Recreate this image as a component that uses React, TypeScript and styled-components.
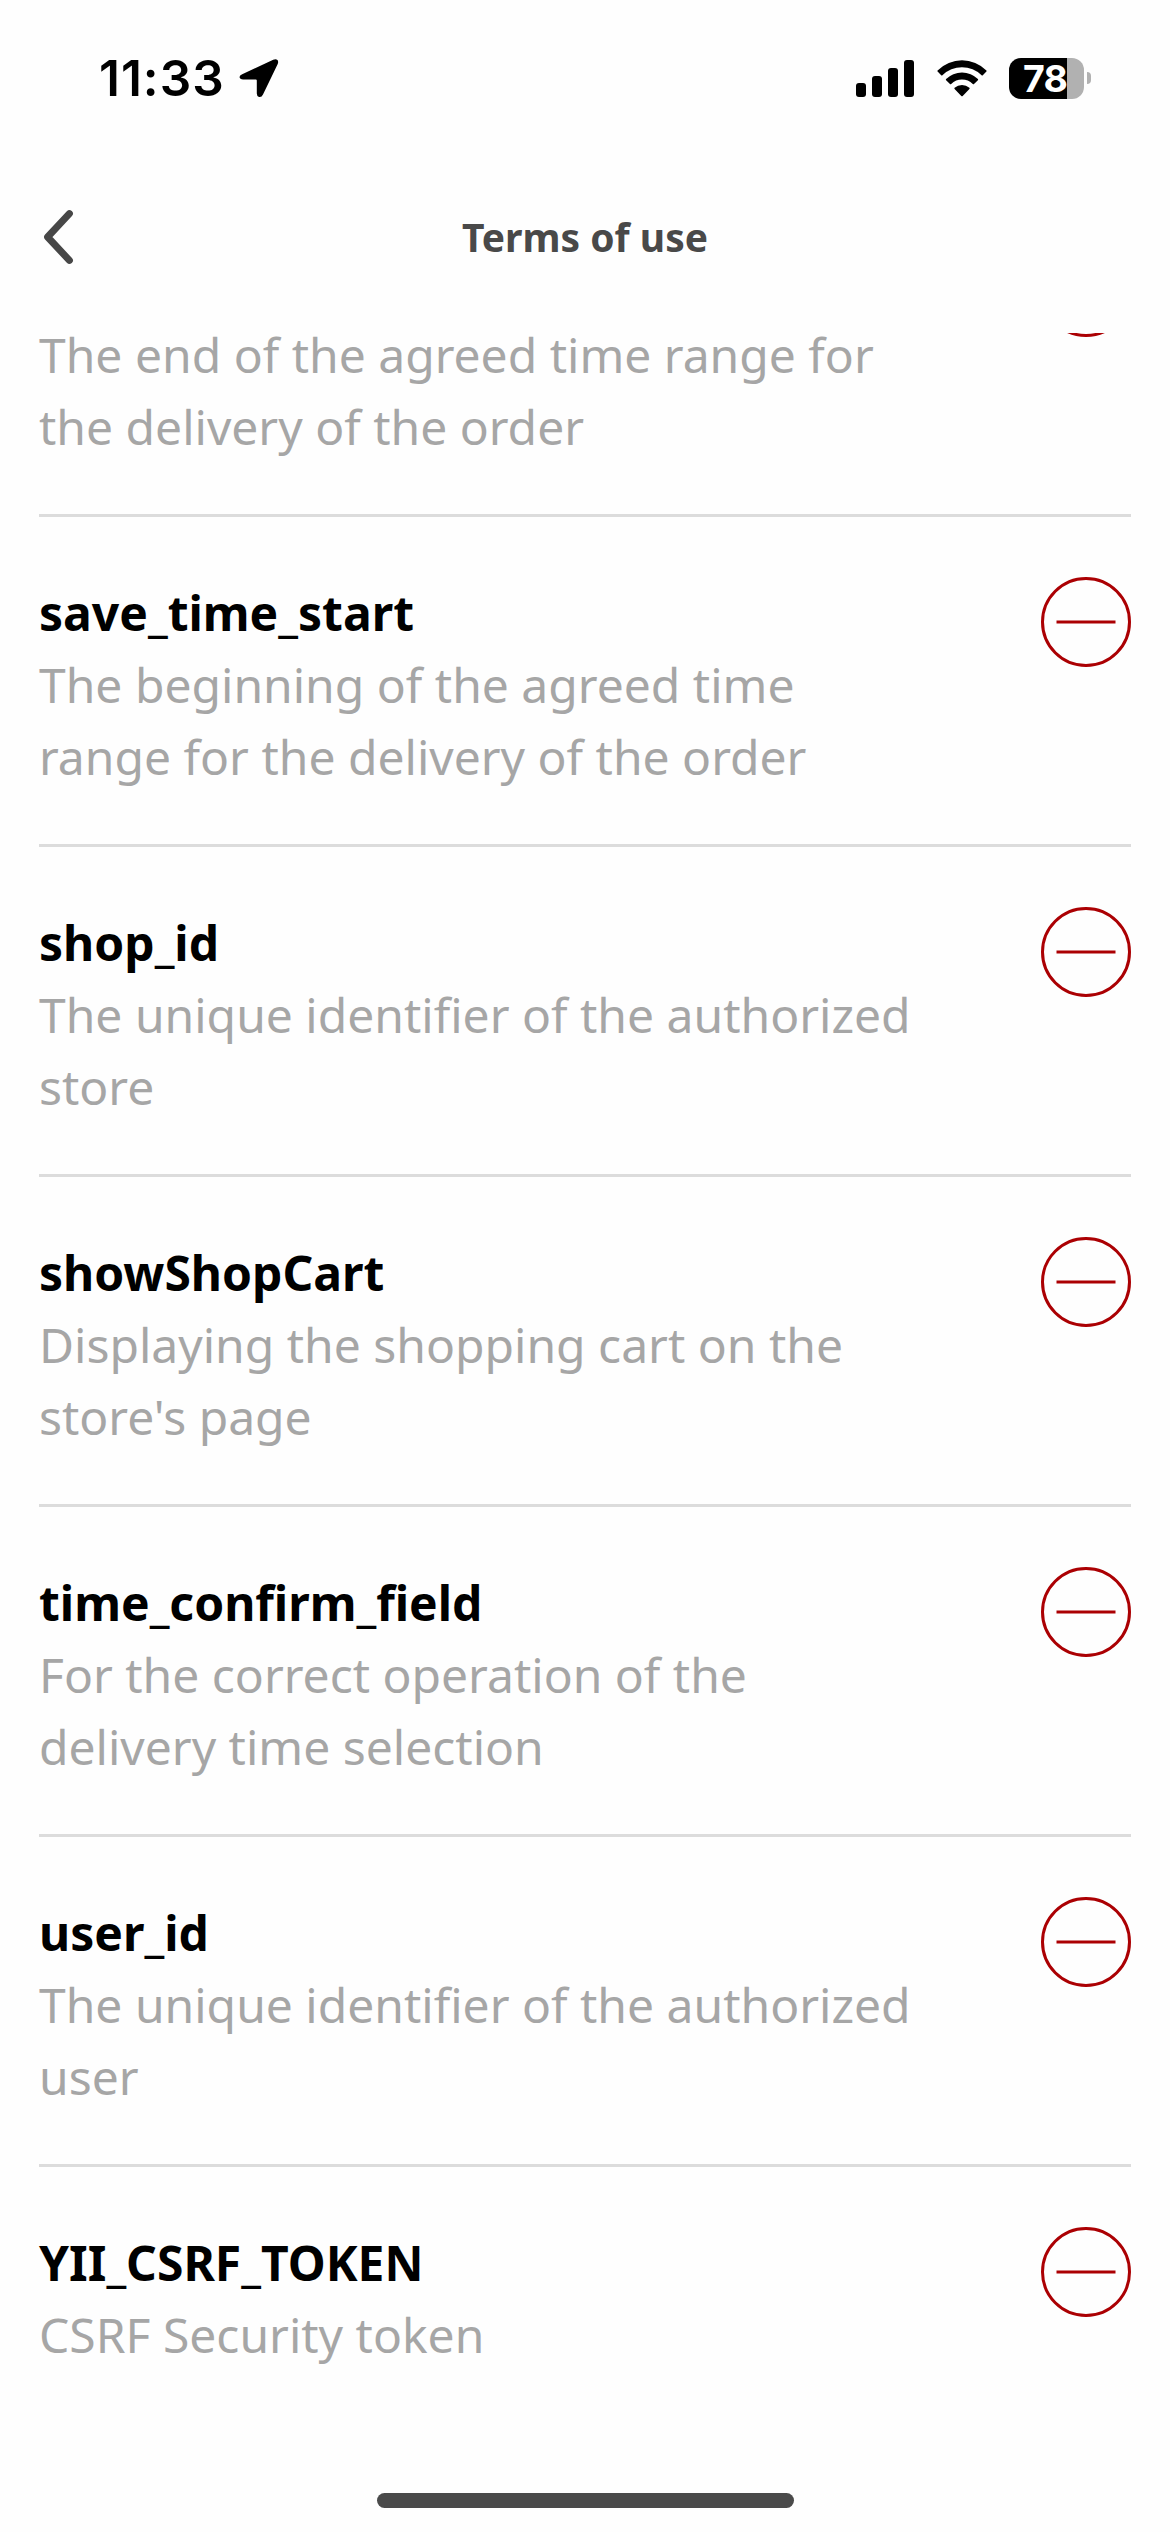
import React from 'react';
import styled, { createGlobalStyle } from 'styled-components';

const GlobalStyle = createGlobalStyle`
  * { box-sizing: border-box; }
  body { margin: 0; background: #fefefe; }
`;

const Screen = styled.div`
  display: flex;
  flex-direction: column;
  width: 1170px;
  height: 2532px;
  overflow: hidden;
  background: #fefefe;
  font-family: 'Noto Sans', sans-serif;
`;

const StatusBar = styled.div`
  display: flex;
  flex: none;
  justify-content: space-between;
  height: 141px;
  padding: 48px 79px 0 99px;
  color: #000;
  font-family: Inter, sans-serif;
`;

const StatusGroup = styled.div`
  display: flex;
  align-items: center;
  height: 60px;
`;

const Clock = styled.time`
  width: 140px;
  font-size: 49.5px;
  font-weight: 600;
  line-height: 60px;
  letter-spacing: 1px;
  white-space: nowrap;
`;

const Glyph = styled.svg`
  display: block;
  flex: none;
  overflow: visible;
`;

const WifiGlyph = styled(Glyph)`
  margin-left: 23px;
`;

const Battery = styled.div`
  display: flex;
  align-items: center;
  margin-left: 22px;
`;

const BatteryBody = styled.div<{ $level: number }>`
  width: 75px;
  height: 41px;
  padding-left: 14px;
  border-radius: 12px;
  background: linear-gradient(to right, #000 ${(p) => p.$level}%, #b1b1b1 ${(p) => p.$level}%);
  color: #fff;
  font-size: 37.5px;
  font-weight: 700;
  line-height: 41px;
  letter-spacing: -0.8px;
`;

const BatteryTip = styled.div`
  width: 4px;
  height: 12px;
  margin-left: 3px;
  border-radius: 0 5px 5px 0;
  background: #b1b1b1;
`;

const Header = styled.header`
  display: grid;
  flex: none;
  grid-template-columns: 117px 1fr 117px;
  align-items: center;
  height: 192px;
`;

const BackButton = styled.button`
  display: flex;
  width: 117px;
  padding: 0 0 0 44px;
  border: 0;
  background: none;
`;

const Heading = styled.h1`
  margin: 0;
  color: #494949;
  font-size: 39px;
  font-weight: 700;
  line-height: 54px;
  text-align: center;
`;

const List = styled.ul`
  flex: 1;
  min-height: 0;
  margin: 0;
  padding: 0 39px;
  overflow: hidden;
  list-style: none;
`;

const Row = styled.li`
  display: flex;
  justify-content: space-between;
  padding: 60px 0 51px;
  border-bottom: 3px solid #dcdcdc;

  &:first-child { margin-top: -146px; }
  &:last-child { border-bottom: 0; }
`;

const RowText = styled.div`
  width: 880px;
  font-size: 48px;
  line-height: 72px;
`;

const Name = styled.h2`
  min-height: 72px;
  margin: 0;
  color: #000;
  font-size: inherit;
  font-weight: 700;
`;

const Description = styled.p`
  margin: 0;
  color: #a6a6a6;
`;

const HomeArea = styled.div`
  display: flex;
  flex: none;
  justify-content: center;
  height: 39px;
`;

const HomeIndicator = styled.div`
  width: 417px;
  height: 15px;
  border-radius: 8px;
  background: #4a4a4a;
`;

const LocationArrow = () => (
  <Glyph width="40" height="40" viewBox="0 0 40 40">
    <path
      d="M3.2 16.2 L34.2 1.8 Q37 .8 38.4 2 Q39.8 3.4 38.6 6.2 L24 36.6 Q22.6 39.6 20 39 Q17.8 38.4 17.8 35.6 V22.6 Q17.8 21.6 16.8 21.6 H4 Q1.2 21.6 .6 19.6 Q.2 17.4 3.2 16.2Z"
      fill="#000"
    />
  </Glyph>
);

const Signal = () => (
  <Glyph width="58" height="37" viewBox="0 0 58 37">
    <rect x="0" y="23" width="10" height="14" rx="3" />
    <rect x="16" y="16" width="10" height="21" rx="3" />
    <rect x="32" y="8" width="10" height="29" rx="3" />
    <rect x="48" y="0" width="10" height="37" rx="3" />
  </Glyph>
);

const Wifi = () => (
  <WifiGlyph width="50" height="37" viewBox="0 0 50 37">
    <path d="M.6 10.4 A34.5 34.5 0 0 1 49.4 10.4 Q50 11 49.4 11.6 L45.8 15.2 Q45.2 15.8 44.6 15.2 A28 28 0 0 0 5.4 15.2 Q4.8 15.8 4.2 15.2 L.6 11.6 Q0 11 .6 10.4Z" />
    <path d="M9.1 19 A22.7 22.7 0 0 1 40.9 19 Q41.5 19.6 40.9 20.2 L37 24 Q36.4 24.6 35.8 24 A15.5 15.5 0 0 0 14.2 24 Q13.6 24.6 13 24 L9.1 20.2 Q8.5 19.6 9.1 19Z" />
    <path d="M17.6 27.8 A11.5 11.5 0 0 1 32.4 27.8 Q33 28.4 32.4 29 L25.7 36 Q25 36.7 24.3 36 L17.6 29 Q17 28.4 17.6 27.8Z" />
  </WifiGlyph>
);

const Chevron = () => (
  <Glyph width="29" height="54" viewBox="0 0 29 54">
    <path d="M25.4 3.6 L3.6 27 L25.4 50.4" fill="none" stroke="#474747" strokeWidth="7" strokeLinecap="round" strokeLinejoin="round" />
  </Glyph>
);

const MinusCircle = () => (
  <Glyph width="90" height="90" viewBox="0 0 90 90" fill="none" stroke="#ab0003" strokeWidth="3">
    <circle cx="45" cy="45" r="43.5" />
    <path d="M15.5 45 H74.5" />
  </Glyph>
);

const cookies: { name?: string; text: string }[] = [
  { text: 'The end of the agreed time range for the delivery of the order' },
  { name: 'save_time_start', text: 'The beginning of the agreed time range for the delivery of the order' },
  { name: 'shop_id', text: 'The unique identifier of the authorized store' },
  { name: 'showShopCart', text: "Displaying the shopping cart on the store's page" },
  { name: 'time_confirm_field', text: 'For the correct operation of the delivery time selection' },
  { name: 'user_id', text: 'The unique identifier of the authorized user' },
  { name: 'YII_CSRF_TOKEN', text: 'CSRF Security token' },
];

export default function App() {
  return (
    <>
      <GlobalStyle />
      <Screen>
        <StatusBar>
          <StatusGroup>
            <Clock>11:33</Clock>
            <LocationArrow />
          </StatusGroup>
          <StatusGroup>
            <Signal />
            <Wifi />
            <Battery>
              <BatteryBody $level={78}>78</BatteryBody>
              <BatteryTip />
            </Battery>
          </StatusGroup>
        </StatusBar>
        <Header>
          <BackButton aria-label="Back">
            <Chevron />
          </BackButton>
          <Heading>Terms of use</Heading>
        </Header>
        <List>
          {cookies.map((cookie) => (
            <Row key={cookie.name ?? 'scrolled'}>
              <RowText>
                <Name>{cookie.name}</Name>
                <Description>{cookie.text}</Description>
              </RowText>
              <MinusCircle />
            </Row>
          ))}
        </List>
        <HomeArea>
          <HomeIndicator />
        </HomeArea>
      </Screen>
    </>
  );
}
